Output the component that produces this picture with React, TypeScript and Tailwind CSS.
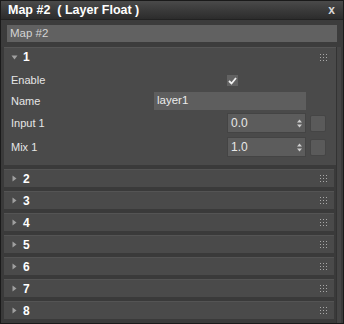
import React from "react";

const Dots = () => (
  <svg width="7" height="7" viewBox="0 0 7 7" className="shrink-0">
    {[0, 3, 6].map((y) =>
      [0, 3, 6].map((x) => <rect key={`${x}-${y}`} x={x} y={y} width="1" height="1" fill="#a8a8a8" />)
    )}
  </svg>
);

const TriDown = () => (
  <svg width="7" height="5" viewBox="0 0 7 5" className="shrink-0">
    <path d="M0.5 0.5 L6.5 0.5 L3.5 4.5 Z" fill="#a0a0a0" />
  </svg>
);

const TriRight = () => (
  <svg width="5" height="7" viewBox="0 0 5 7" className="shrink-0">
    <path d="M0.5 0.5 L4.5 3.5 L0.5 6.5 Z" fill="#a0a0a0" />
  </svg>
);

const Spin = ({ value }: { value: string }) => (
  <div className="flex items-center gap-[4px]">
    <div className="w-[79px] h-[20px] bg-[#5c5c5c] border border-[#444] flex items-center pl-[3px] pr-[3px] justify-between">
      <span className="text-[#e8e8e8] text-[12px]">{value}</span>
      <svg width="5" height="9" viewBox="0 0 5 9">
        <path d="M0 3.5 L2.5 0.5 L5 3.5 Z" fill="#cfcfcf" />
        <path d="M0 5.5 L2.5 8.5 L5 5.5 Z" fill="#cfcfcf" />
      </svg>
    </div>
    <div className="w-[16px] h-[17px] bg-[#5a5a5a] border border-[#454545] rounded-[2px]" />
  </div>
);

export default function App() {
  const collapsed = ["2", "3", "4", "5", "6", "7", "8"];
  return (
    <div
      className="w-[344px] h-[324px] bg-[#2a2a2a] flex flex-col overflow-hidden border border-[#1a1a1a]"
      style={{ fontFamily: '"Liberation Sans", Arial, sans-serif' }}
    >
      {/* title bar */}
      <div className="h-[19px] shrink-0 flex items-center justify-between pl-[7px] pr-[8px] bg-gradient-to-b from-[#4a4a4a] to-[#2c2c2c] border-b border-[#222]">
        <span className="text-white font-bold text-[12.5px] whitespace-pre">Map #2  ( Layer Float )</span>
        <span className="text-[#d8d8d8] font-bold text-[12px] leading-none">x</span>
      </div>
      {/* name area */}
      <div className="h-[27px] shrink-0 bg-[#3c3c3c] flex items-center px-[6px]">
        <div className="flex-1 h-[17px] bg-[#616161] flex items-center px-[3px]">
          <span className="text-[#d4d4d4] text-[11.5px]">Map #2</span>
        </div>
      </div>
      {/* body */}
      <div className="flex-1 flex bg-[#3a3a3a] pl-[3px]">
        <div className="flex-1 flex flex-col gap-[4px]">
          {/* panel 1 */}
          <div className="h-[118px] shrink-0 bg-[#4a4a4a] border-t border-[#555] flex flex-col">
            <div className="h-[18px] flex items-center pl-[7px] pr-[9px]">
              <TriDown />
              <span className="ml-[5px] text-white font-bold text-[12px]">1</span>
              <div className="flex-1" />
              <Dots />
            </div>
            <div className="flex flex-col pl-[7px] text-[#e6e6e6] text-[11px] mt-[4px]">
              <div className="h-[21px] flex items-center">
                <span className="w-[216px]">Enable</span>
                <div className="w-[11px] h-[11px] bg-[#626262] flex items-center justify-center">
                  <svg width="9" height="8" viewBox="0 0 9 8">
                    <path d="M1 4 L3.5 6.5 L8 1" stroke="#f0f0f0" strokeWidth="1.8" fill="none" />
                  </svg>
                </div>
              </div>
              <div className="h-[20px] flex items-center">
                <span className="w-[143px]">Name</span>
                <div className="w-[152px] h-[18px] bg-[#5e5e5e] flex items-center px-[3px]">
                  <span className="text-[#ececec] text-[11.5px]">layer1</span>
                </div>
              </div>
              <div className="h-[24px] flex items-center">
                <span className="w-[216px]">Input 1</span>
                <Spin value="0.0" />
              </div>
              <div className="h-[24px] flex items-center">
                <span className="w-[216px]">Mix 1</span>
                <Spin value="1.0" />
              </div>
            </div>
          </div>
          {collapsed.map((n) => (
            <div key={n} className="h-[18px] shrink-0 bg-[#4a4a4a] border-t border-[#545454] flex items-center pl-[8px] pr-[7px] mr-[2px]">
              <TriRight />
              <span className="ml-[6px] text-white font-bold text-[12px]">{n}</span>
              <div className="flex-1" />
              <Dots />
            </div>
          ))}
        </div>
        {/* scrollbar */}
        <div className="w-[5px] bg-[#454545] border-l border-[#333] mr-[2px]" />
      </div>
    </div>
  );
}
